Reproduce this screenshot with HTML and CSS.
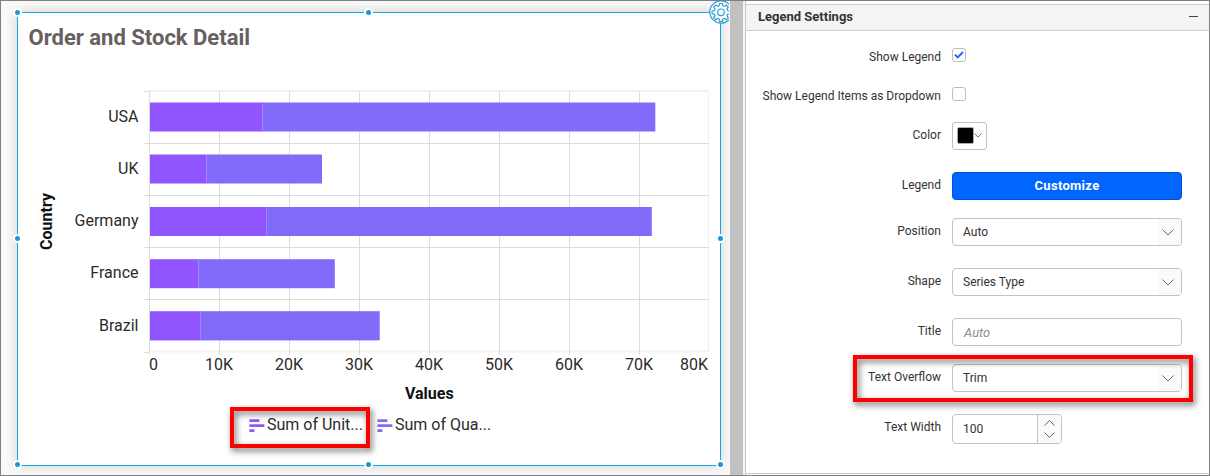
FILE: index.html
```html
<!DOCTYPE html>
<html lang="en">
<head>
<meta charset="utf-8">
<title>Legend Settings</title>
<link rel="stylesheet" href="styles.css">
</head>
<body>
<div class="app">
  <main class="canvas">
    <section class="widget">
      <h1 class="widget-title">Order and Stock Detail</h1>
      <svg class="chart" viewBox="18 61 702 379" width="702" height="379">
        <g class="band">
          <path d="M149 91H709M149 351.5H709"/>
        </g>
        <path class="edge" d="M708.5 91V352"/>
        <g class="grid">
          <path d="M149.5 91V355M219.5 91V355M289.5 91V355M359.5 91V355M429.5 91V355M499.5 91V355M569.5 91V355M639.5 91V355"/>
          <path d="M144 91.5H150M144 143.5H709M144 195.5H709M144 247.5H709M144 299.5H709M144 352.5H150"/>
        </g>
        <g class="units">
          <rect x="150" y="102.5" width="113" height="29"/>
          <rect x="150" y="154.5" width="56.5" height="29"/>
          <rect x="150" y="207" width="117" height="29"/>
          <rect x="150" y="259.2" width="48.5" height="29"/>
          <rect x="150" y="311.2" width="51" height="29.2"/>
        </g>
        <g class="quantity">
          <rect x="262.5" y="102.5" width="392.8" height="29"/>
          <rect x="206.5" y="154.5" width="115.5" height="29"/>
          <rect x="267" y="207" width="384.8" height="29"/>
          <rect x="198.5" y="259.2" width="136.3" height="29"/>
          <rect x="200.7" y="311.2" width="179" height="29.2"/>
        </g>
        <path class="joint" d="M262.5 102.5v29M206.5 154.5v29M266.5 207v29M198.5 259.2v29M200.5 311.2v29"/>
        <g class="category">
          <text x="138.5" y="122">USA</text>
          <text x="138.5" y="174">UK</text>
          <text x="138.5" y="226">Germany</text>
          <text x="138.5" y="278">France</text>
          <text x="138.5" y="331">Brazil</text>
        </g>
        <g class="value">
          <text x="153.5" y="370">0</text>
          <text x="219" y="370">10K</text>
          <text x="289" y="370">20K</text>
          <text x="359" y="370">30K</text>
          <text x="429" y="370">40K</text>
          <text x="499" y="370">50K</text>
          <text x="569" y="370">60K</text>
          <text x="639" y="370">70K</text>
          <text x="694" y="370">80K</text>
        </g>
        <text class="axis-title" x="429.3" y="399">Values</text>
        <text class="axis-title" transform="translate(52 221.5) rotate(-90)">Country</text>
        <path class="key-units" d="M249.400 419.3h10v2.7h-10zM249.400 424.3h15v2.7h-15zM249.400 429.2h5v2.7h-5z"/>
        <text class="key" x="267" y="430">Sum of Unit...</text>
        <path class="key-quantity" d="M377.400 419.3h10v2.7h-10zM377.400 424.3h15v2.7h-15zM377.400 429.2h5v2.7h-5z"/>
        <text class="key" x="395" y="430">Sum of Qua...</text>
      </svg>
      <i class="handle top left"></i><i class="handle top center"></i>
      <i class="handle middle left"></i><i class="handle middle right"></i>
      <i class="handle bottom left"></i><i class="handle bottom center"></i><i class="handle bottom right"></i>
      <span class="callout callout-key"></span>
    </section>
    <svg class="gear" width="20" height="24" viewBox="0 0 20 24">
      <circle class="gear-disc" cx="12" cy="12" r="11.2"/>
      <path d="M10.6 3.5h2.8l.5 2.3 1.4.6 2-1.3 2 2-1.3 2 .6 1.4 2.3.5v2.8l-2.3.5-.6 1.4 1.3 2-2 2-2-1.3-1.4.6-.5 2.3h-2.8l-.5-2.3-1.4-.6-2 1.3-2-2 1.3-2-.6-1.4-2.3-.5V11l2.3-.5.6-1.4-1.3-2 2-2 2 1.3 1.4-.6z"/>
      <circle cx="12" cy="12.3" r="3.3"/>
    </svg>
  </main>
  <div class="splitter"></div>
  <aside class="panel">
    <header class="panel-head"><span>Legend Settings</span><i class="collapse"></i></header>
    <form class="settings">
      <div class="row check-row"><label>Show Legend</label><span class="check"><svg width="12" height="12" viewBox="0 0 12 12"><path d="M2 5.7l2.7 2.7L10 3"/></svg></span></div>
      <div class="row check-row"><label>Show Legend Items as Dropdown</label><span class="check"></span></div>
      <div class="row color-row"><label>Color</label><span class="color"><i class="swatch"></i><svg width="8" height="5" viewBox="0 0 8 5"><path d="M.5.5L4 4 7.5.5"/></svg></span></div>
      <div class="row button-row"><label>Legend</label><span class="button">Customize</span></div>
      <div class="row"><label>Position</label><span class="field"><span class="text">Auto</span><span class="drop"><svg width="12" height="7" viewBox="0 0 12 7"><path d="M.5.5L6 6 11.500.5"/></svg></span></span></div>
      <div class="row"><label>Shape</label><span class="field"><span class="text">Series Type</span><span class="drop"><svg width="12" height="7" viewBox="0 0 12 7"><path d="M.5.5L6 6 11.500.5"/></svg></span></span></div>
      <div class="row title-row"><label>Title</label><span class="field"><span class="text hint">Auto</span></span></div>
      <div class="row"><label>Text Overflow</label><span class="field"><span class="text">Trim</span><span class="drop"><svg width="12" height="7" viewBox="0 0 12 7"><path d="M.5.5L6 6 11.500.5"/></svg></span></span></div>
      <div class="row"><label>Text Width</label><span class="field number"><span class="text">100</span><span class="spin"><svg width="11" height="6" viewBox="0 0 11 6"><path d="M.5 5.500L5.500.5l5 5"/></svg><svg width="11" height="6" viewBox="0 0 11 6"><path d="M.5.5l5 5 5-5"/></svg></span></span></div>
    </form>
    <span class="callout callout-overflow"></span>
  </aside>
</div>
</body>
</html>
```
FILE: styles.css
```css
* { box-sizing: border-box; }
body { margin: 0; font-family: Roboto, "Liberation Sans", sans-serif; }
svg { display: block; }
.app {
  display: flex;
  width: 1210px;
  height: 476px;
  border: 1px solid #808080;
  overflow: hidden;
  background: #fff;
}
.canvas {
  position: relative;
  width: 729px;
  padding: 11px 0 0 16px;
  background: #f9f9f9;
  overflow: hidden;
}
.widget {
  position: relative;
  width: 704px;
  height: 454px;
  border: 1px solid #15aadf;
  background: #fff;
  box-shadow: 0 0 12px rgba(0, 0, 0, .16);
}
.widget-title {
  height: 48px;
  margin: 0;
  padding: 11px 0 0 10.5px;
  font-size: 22px;
  line-height: 28px;
  font-weight: 700;
  color: #67605f;
  white-space: nowrap;
}
.band path { stroke: #f3f3f3; stroke-width: 2; }
.edge { stroke: #efefef; }
.grid path { fill: none; stroke: #dcdcdc; }
.units rect { fill: #9155ff; }
.quantity rect { fill: #826bf9; }
.joint { stroke: #a384fb; }
.category, .value, .key { font-size: 16px; fill: #2b2b2b; }
.category { text-anchor: end; }
.value, .axis-title { text-anchor: middle; }
.axis-title { font-size: 16px; font-weight: 700; fill: #111; }
.key-units { fill: #9155ff; }
.key-quantity { fill: #826bf9; }
.handle {
  position: absolute;
  width: 9px;
  height: 9px;
  border: 2px solid #fff;
  border-radius: 50%;
  background: #159bd7;
}
.top { top: -5px; }
.middle { top: 221px; }
.bottom { bottom: -4px; }
.left { left: -5px; }
.center { left: 346px; }
.right { right: -5px; }
.gear {
  position: absolute;
  left: 707.5px;
  top: -1px;
  fill: none;
  stroke: #2a9fdb;
  stroke-width: 1.2;
}
.gear-disc { fill: #fff; }
.callout {
  position: absolute;
  border: 4px solid #f00;
  filter: drop-shadow(2px 3px 3px rgba(0, 0, 0, .6));
}
.callout-key { left: 212px; top: 394px; width: 140px; height: 41px; }
.callout-overflow { left: 107px; top: 354px; width: 340px; height: 47px; }
.splitter {
  width: 16px;
  border-right: 1px solid #c8c8c8;
  background: linear-gradient(90deg, #c1c1c1 13px, #f5f5f5 13px);
}
.panel {
  position: relative;
  flex: 1;
  padding-top: 3px;
  border-bottom: 1px solid #ccc;
  height: 473px;
  font-size: 12px;
  color: #333;
}
.panel-head {
  display: flex;
  align-items: center;
  justify-content: space-between;
  height: 27px;
  padding: 0 11px 2px 12px;
  border: solid #cecece;
  border-width: 1px 0;
  background: #f4f4f4;
  font-size: 13px;
  font-weight: 700;
}
.collapse { width: 9px; height: 1px; background: #444; }
.settings { padding-top: 17px; }
.row {
  display: grid;
  grid-template-columns: 195px 230px;
  column-gap: 11px;
  height: 28px;
  margin-bottom: 22px;
}
.row label { text-align: right; line-height: 26px; }
.check-row { height: 14px; margin-bottom: 25px; }
.check-row label { line-height: 18px; }
.check {
  width: 14px;
  height: 14px;
  border: 1px solid #bdbdbd;
  border-radius: 3px;
}
.check path { fill: none; stroke: #1967ff; stroke-width: 1.9; }
.color-row { margin: -4px 0 22px; }
.button-row { margin-bottom: 18px; }
.title-row { margin-bottom: 18px; }
.color {
  display: flex;
  align-items: center;
  width: 35px;
  padding: 0 0 1px 4px;
  border: 1px solid #c2c2c2;
  border-radius: 3px;
}
.color svg { fill: none; stroke: #777; }
.swatch { width: 17px; height: 17px; border: 1px solid #aaa; border-radius: 2px; background: #000; }
.button {
  border: 1px solid #0050cf;
  border-radius: 4px;
  background: #06f;
  color: #fff;
  font-size: 13px;
  font-weight: 700;
  letter-spacing: .3px;
  line-height: 26px;
  text-align: center;
}
.field {
  display: flex;
  border: 1px solid #c2c2c2;
  border-radius: 4px;
  overflow: hidden;
}
.text { flex: 1; padding-left: 10px; line-height: 27px; }
.hint { padding-left: 11px; color: #8c8c8c; font-size: 13px; font-style: italic; }
.number .text { line-height: 29px; }
.drop {
  display: flex;
  align-items: center;
  width: 23px;
  padding-left: 4px;
  background: #fafafa;
}
.drop svg, .spin svg { fill: none; stroke: #666; }
.number { width: 110px; height: 30px; }
.spin {
  display: flex;
  flex-direction: column;
  align-items: center;
  justify-content: center;
  gap: 6px;
  width: 24px;
  border-left: 1px solid #c2c2c2;
  background: #fafafa;
}
```
